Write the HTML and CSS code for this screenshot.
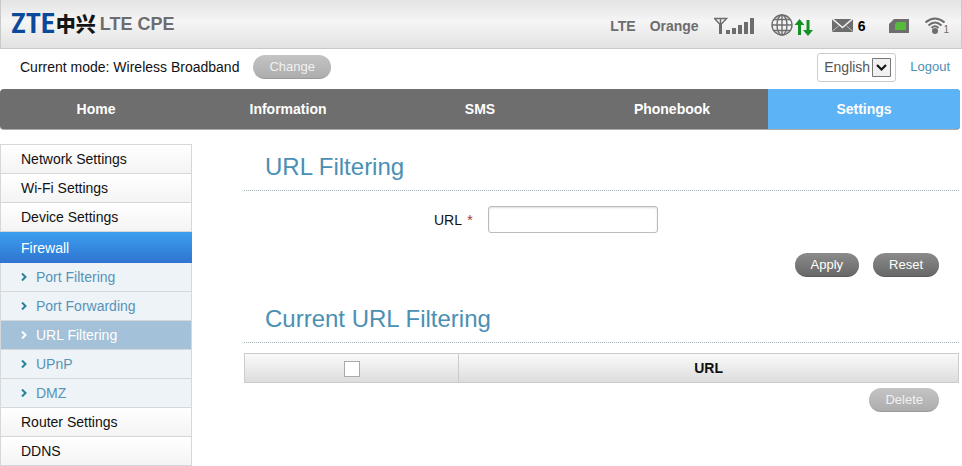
FILE: index.html
```html
<!DOCTYPE html>
<html lang="en">
<head>
    <meta charset="UTF-8">
    <meta name="viewport" content="width=device-width, initial-scale=1.0">
    <title>LTE CPE</title>
    <link rel="stylesheet" href="styles.css">
</head>
<body>

    <header class="header">
        <div class="brand">
            <div class="logo"><span class="logo-zte">ZTE</span><span class="logo-cn" lang="zh">中兴</span></div>
            <span class="product">LTE CPE</span>
        </div>
        <div class="status">
            <span class="network">LTE</span>
            <span class="operator">Orange</span>
            <!-- signal strength -->
            <svg class="icon-signal" width="40" height="18" viewBox="0 0 40 18">
                <path d="M0.5 1.500h12L6.500 8z M6.500 1v15" fill="none" stroke="#6d6d6d" stroke-width="1.5"/>
                <path d="M5 6h3v11h-3z M12 13h4v4h-4z M18 11h4v6h-4z M24 8h4v9h-4z M30 5h4v12h-4z M36 1h4v16h-4z" fill="#6d6d6d"/>
            </svg>
            <!-- connection and traffic -->
            <svg class="icon-globe" width="42" height="24" viewBox="0 0 42 24">
                <g fill="none" stroke="#6d6d6d" stroke-width="1.4">
                    <circle cx="11" cy="11" r="10"/>
                    <ellipse cx="11" cy="11" rx="5" ry="10"/>
                    <path d="M11 1v20M1 11h20M3 5.500h16M3 16.500h16"/>
                </g>
                <path d="M28.500 5L33.500 11h-3.500V21h-3v-10h-3.500z M37 22L42 16h-3.500V6h-3v10h-3.500z" fill="#149125"/>
            </svg>
            <!-- messages -->
            <div class="messages">
                <svg width="21" height="13" viewBox="0 0 21 13">
                    <path d="M0 0h21v13H0z" fill="#6d6d6d"/>
                    <path d="M0.500 0L10.500 8.500L20.500 0" fill="none" stroke="#f1f1f1" stroke-width="1.600"/>
                    <path d="M0 12.500L6.500 7M21 12.500L14.500 7" fill="none" stroke="#d0d0d0" stroke-width="0.800"/>
                </svg>
                <span>6</span>
            </div>
            <!-- SIM card -->
            <svg class="icon-sim" width="20" height="14" viewBox="0 0 20 14">
                <path d="M5 0h15v14H0V5z" fill="#6d6d6d"/>
                <path d="M8 3h9v8H6V5z" fill="#55bb3a"/>
            </svg>
            <!-- wifi clients -->
            <div class="wifi">
                <svg width="20" height="18" viewBox="0 0 20 18">
                    <g fill="none" stroke="#6d6d6d" stroke-width="2">
                        <path d="M0.500 5.500Q10-2.500 19.500 5.500"/>
                        <path d="M3.500 8.500Q10 2.500 16.500 8.500"/>
                        <path d="M6.500 11Q10 7.500 13.500 11"/>
                    </g>
                    <circle cx="10" cy="14" r="3" fill="#6d6d6d"/>
                </svg>
                <span>1</span>
            </div>
        </div>
    </header>

    <div class="mode-bar">
        <span>Current mode: Wireless Broadband</span>
        <button type="button" class="btn btn-disabled">Change</button>
        <div class="account">
            <div class="language">
                <select id="language" name="language" aria-label="Language">
                    <option>English</option>
                </select>
                <svg class="language-arrow" width="19" height="19" viewBox="0 0 19 19">
                    <path d="M0.500 0.500h18v18h-18z" fill="#f0f0f0" stroke="#777"/>
                    <path d="M5 7l4.500 4.500L14 7" fill="none" stroke="#111" stroke-width="2.200"/>
                </svg>
            </div>
            <a href="#logout">Logout</a>
        </div>
    </div>

    <nav class="main-nav">
        <a href="#home">Home</a>
        <a href="#information">Information</a>
        <a href="#sms">SMS</a>
        <a href="#phonebook">Phonebook</a>
        <a href="#settings" class="active">Settings</a>
    </nav>

    <div class="page">
        <nav class="side-menu">
            <a href="#network">Network Settings</a>
            <a href="#wifi">Wi-Fi Settings</a>
            <a href="#device">Device Settings</a>
            <a href="#firewall" class="open">Firewall</a>
            <a href="#port-filtering" class="sub"><svg width="6" height="8" viewBox="0 0 6 8"><path d="M1 0.500L4.500 4L1 7.500"/></svg>Port Filtering</a>
            <a href="#port-forwarding" class="sub"><svg width="6" height="8" viewBox="0 0 6 8"><path d="M1 0.500L4.500 4L1 7.500"/></svg>Port Forwarding</a>
            <a href="#url-filtering" class="sub current"><svg width="6" height="8" viewBox="0 0 6 8"><path d="M1 0.500L4.500 4L1 7.500"/></svg>URL Filtering</a>
            <a href="#upnp" class="sub"><svg width="6" height="8" viewBox="0 0 6 8"><path d="M1 0.500L4.500 4L1 7.500"/></svg>UPnP</a>
            <a href="#dmz" class="sub"><svg width="6" height="8" viewBox="0 0 6 8"><path d="M1 0.500L4.500 4L1 7.500"/></svg>DMZ</a>
            <a href="#router">Router Settings</a>
            <a href="#ddns">DDNS</a>
        </nav>

        <main class="content">
            <form class="filter-form">
                <h2>URL Filtering</h2>
                <div class="field">
                    <label for="url">URL <span class="required">*</span></label>
                    <input type="text" id="url" name="url">
                </div>
                <div class="buttons">
                    <button type="button" class="btn">Apply</button>
                    <button type="reset" class="btn">Reset</button>
                </div>
            </form>

            <section>
                <h2>Current URL Filtering</h2>
                <table class="url-table">
                    <thead>
                        <tr>
                            <th class="check"><input type="checkbox" id="checkAll" aria-label="Select all"></th>
                            <th>URL</th>
                        </tr>
                    </thead>
                </table>
                <div class="buttons">
                    <button type="button" class="btn btn-disabled">Delete</button>
                </div>
            </section>
        </main>
    </div>

</body>
</html>
```

FILE: styles.css
```css
* {
    box-sizing: border-box;
}

body {
    margin: 0;
    background-color: #fff;
    color: #111;
    font-family: "Liberation Sans", Arial, sans-serif;
    font-size: 14px;
    line-height: 20px;
}

a {
    color: #4a90b4;
    text-decoration: none;
}

svg {
    display: block;
    flex: none;
}

/* header */
.header {
    display: flex;
    justify-content: space-between;
    height: 49px;
    padding: 0 12px 0 10px;
    border: 1px solid #c9c9c9;
    border-top: 0;
    background: linear-gradient(#e4e4e4, #f5f5f5 45%, #e2e2e2);
}

.brand,
.logo,
.status,
.messages,
.wifi {
    display: flex;
    align-items: center;
}

.brand {
    gap: 4px;
}

.logo {
    gap: 1px;
    font-weight: bold;
}

.logo-zte {
    color: #0b4a9b;
    font-family: "Roboto Condensed", "Open Sans Condensed", "Liberation Sans", sans-serif;
    font-size: 28px;
}

.logo-cn {
    color: #151515;
    font-family: "Noto Sans CJK SC", sans-serif;
    font-size: 20px;
    font-weight: 900;
}

.product {
    color: #6d6d6d;
    font-size: 18px;
    font-weight: bold;
}

.status {
    padding-top: 3px;
    color: #6d6d6d;
    font-weight: bold;
}

.operator {
    margin: 0 15px 0 14px;
}

.icon-globe {
    margin: 0 19px 0 17px;
}

.messages {
    gap: 5px;
    color: #000;
}

.icon-sim {
    margin: 0 16px 0 24px;
}

.wifi span {
    margin-left: -2px;
    padding-top: 8px;
    font-size: 10px;
    font-weight: normal;
}

/* mode bar */
.mode-bar {
    display: flex;
    align-items: center;
    gap: 14px;
    height: 40px;
    padding: 0 12px 4px 20px;
}

.account {
    display: flex;
    align-items: center;
    gap: 14px;
    margin-left: auto;
    font-size: 13px;
}

.language {
    position: relative;
}

.language select {
    display: block;
    width: 79px;
    height: 29px;
    padding: 0 6px;
    border: 1px solid #ccc;
    border-radius: 3px;
    background-color: #fff;
    color: #555;
    font: inherit;
    font-size: 14px;
    appearance: none;
}

.language-arrow {
    position: absolute;
    top: 5px;
    right: 5px;
    pointer-events: none;
}

.btn {
    height: 24px;
    padding: 0 16px;
    border: 0;
    border-bottom: 1px solid #5a5a5a;
    border-radius: 12px;
    background: linear-gradient(#8b8b8b, #686868);
    color: #fff;
    font: inherit;
    font-size: 13px;
    cursor: pointer;
}

.btn-disabled {
    border-bottom-color: #999;
    background: linear-gradient(#c4c4c4, #adadad);
    color: #f1f1f1;
}

/* main navigation */
.main-nav {
    display: flex;
    margin-right: 2px;
    overflow: hidden;
    border-bottom: 1px solid #aaa;
    border-radius: 4px;
    background-color: #6e6e6e;
}

.main-nav a {
    flex: 1;
    padding: 10px 0;
    color: #fff;
    font-weight: bold;
    text-align: center;
}

.main-nav .active {
    background-color: #5cb3f5;
}

.page {
    display: flex;
    gap: 52px;
    padding: 14px 3px 0 0;
}

/* side menu */
.side-menu {
    flex: none;
    width: 192px;
    border: 1px solid #d4d8da;
    border-bottom: 0;
}

.side-menu a {
    display: flex;
    align-items: center;
    height: 29px;
    padding-left: 20px;
    border-bottom: 1px solid #d4d8da;
    background: linear-gradient(#fff, #f4f4f4);
    color: #111;
}

.side-menu .open {
    height: 31px;
    margin: 0 -1px;
    padding-left: 21px;
    border-bottom: 0;
    background: linear-gradient(#3c9ff0, #2f74d0);
    color: #fff;
}

.side-menu .sub {
    gap: 9px;
    background: #eef3f7;
    color: #5594b8;
}

.side-menu .current {
    background: #a3c1d8;
    color: #fff;
}

.sub path {
    fill: none;
    stroke: #28809c;
    stroke-width: 2;
}

.current path {
    stroke: #fff;
}

/* content */
.content {
    flex: 1;
}

h2 {
    margin: 0;
    padding: 8px 21px;
    border-bottom: 1px dotted #a5b5ba;
    color: #4a90b4;
    font-size: 24px;
    font-weight: normal;
    line-height: 30px;
}

.filter-form {
    margin-bottom: 19px;
}

.field {
    display: grid;
    grid-template-columns: 32% 1fr;
    align-items: center;
    gap: 15px;
    padding: 15px 0 20px;
}

.field label {
    text-align: right;
}

.required {
    margin-left: 2px;
    color: #a33;
}

.field input {
    width: 170px;
    height: 27px;
    padding: 0 6px;
    border: 1px solid #bbb;
    border-radius: 3px;
    box-shadow: inset 0 1px 2px #ddd;
    font: inherit;
}

.buttons {
    display: flex;
    justify-content: flex-end;
    gap: 14px;
    padding-right: 20px;
}

.url-table {
    width: 100%;
    margin: 10px 0 5px;
    border: 1px solid #ccc;
    border-collapse: collapse;
    background: linear-gradient(#fafafa, #dcdcdc);
}

.url-table th {
    height: 29px;
    padding: 0;
}

.url-table .check {
    width: 30%;
    border-right: 1px solid #ccc;
}

.check input {
    display: block;
    width: 16px;
    height: 16px;
    margin: 2px auto 0;
    border: 1px solid #aaa;
    background-color: #fff;
    appearance: none;
}
```
